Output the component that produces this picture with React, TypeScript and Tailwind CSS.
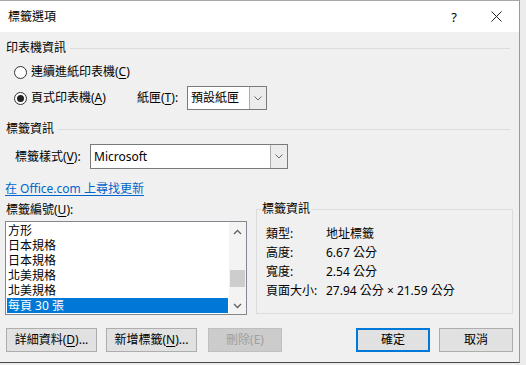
import React from "react";

const Chevron = ({ up = false, color = "#606060" }: { up?: boolean; color?: string }) => (
  <svg width="9" height="6" viewBox="0 0 9 6">
    <polyline
      points={up ? "1,5 4.5,1.5 8,5" : "1,1 4.5,4.5 8,1"}
      fill="none"
      stroke={color}
      strokeWidth="1.3"
    />
  </svg>
);

const Radio = ({ checked }: { checked?: boolean }) => (
  <span className="w-[13px] h-[13px] rounded-full border border-[#333] bg-white flex items-center justify-center shrink-0">
    {checked && <span className="w-[7px] h-[7px] rounded-full bg-[#222]" />}
  </span>
);

const Select = ({ value, w, h }: { value: string; w: string; h: string }) => (
  <div className={`${w} ${h} flex border border-[#7a7a7a] bg-white`}>
    <div className="flex-1 flex items-center pl-[3px] text-black">{value}</div>
    <div className="w-[17px] border-l border-[#adadad] bg-[#ececec] flex items-center justify-center">
      <svg width="8" height="5" viewBox="0 0 8 5">
        <polyline points="0.5,0.5 4,4 7.5,0.5" fill="none" stroke="#6a6a6a" strokeWidth="1" />
      </svg>
    </div>
  </div>
);

const Header = ({ text }: { text: string }) => (
  <div className="flex items-center h-4 ml-[6px] mr-[9px]">
    <span className="leading-4">{text}</span>
    <div className="flex-1 h-px bg-[#dcdcdc] ml-[4px]" />
  </div>
);

const U = ({ c }: { c: string }) => <span className="underline underline-offset-2">{c}</span>;

const Btn = ({
  children,
  w,
  variant = "normal",
  cls = "",
}: {
  children: React.ReactNode;
  w: string;
  variant?: "normal" | "default" | "disabled";
  cls?: string;
}) => {
  const v =
    variant === "default"
      ? "border-2 border-[#0078d7] bg-[#e1e1e1] text-black"
      : variant === "disabled"
      ? "border border-[#bfbfbf] bg-[#cccccc] text-[#a0a0a0]"
      : "border border-[#adadad] bg-[#e1e1e1] text-black";
  return <div className={`${w} h-[24px] flex items-center justify-center ${v} ${cls}`}>{children}</div>;
};

export default function App() {
  const rows = ["方形", "日本規格", "日本規格", "北美規格", "北美規格", "每頁 30 張"];
  return (
    <div className="w-[526px] h-[365px] bg-[#ececec] font-['Noto_Sans','Noto_Sans_CJK_TC',sans-serif] text-[12px] leading-4 text-black overflow-hidden">
      <div className="w-[520px] h-[363px] bg-[#f0f0f0] border-t border-r border-b border-t-[#a8a8a8] border-r-[#9a9a9a] border-b-[#4a4a4a] flex flex-col">
        {/* Title bar */}
        <div className="h-[31px] bg-white flex items-center shrink-0">
          <span className="ml-[8px]">標籤選項</span>
          <div className="flex-1" />
          <span className="text-[13px] mr-[34px]">?</span>
          <svg width="11" height="11" viewBox="0 0 11 11" className="mr-[17px]">
            <path d="M0.5 0.5 L10.5 10.5 M10.5 0.5 L0.5 10.5" stroke="#222" strokeWidth="1" />
          </svg>
        </div>

        {/* 印表機資訊 */}
        <div className="mt-[8px]">
          <Header text="印表機資訊" />
        </div>
        <div className="mt-[8px] h-4 flex items-center ml-[14px] gap-[4px]">
          <Radio />
          <span>
            連續進紙印表機(<U c="C" />)
          </span>
        </div>
        <div className="mt-[6px] h-[24px] flex items-center ml-[14px]">
          <Radio checked />
          <span className="ml-[4px] w-[106px]">
            頁式印表機(<U c="A" />)
          </span>
          <span className="w-[50px]">
            紙匣(<U c="T" />):
          </span>
          <Select value="預設紙匣" w="w-[80px]" h="h-[24px]" />
        </div>

        {/* 標籤資訊 */}
        <div className="mt-[11px]">
          <Header text="標籤資訊" />
        </div>
        <div className="mt-[7px] h-[25px] flex items-center ml-[15px]">
          <span className="w-[75px]">
            標籤樣式(<U c="V" />):
          </span>
          <Select value="Microsoft" w="w-[198px]" h="h-[25px]" />
        </div>
        <div className="mt-[12px] h-4 ml-[5px]">
          <span className="text-[#0066cc] underline underline-offset-2">在 Office.com 上尋找更新</span>
        </div>

        {/* lower area */}
        <div className="mt-[5px] flex">
          <div className="ml-[5px] w-[242px] flex flex-col">
            <div className="h-4 pl-[1px]">
              標籤編號(<U c="U" />):
            </div>
            <div className="mt-[3px] h-[94px] border border-[#828790] bg-white flex">
              <div className="flex-1 pt-[1px] flex flex-col">
                {rows.map((r, i) => (
                  <div
                    key={i}
                    className={`h-[15px] leading-[15px] pl-[1px] mx-[1px] overflow-hidden ${
                      i === rows.length - 1 ? "bg-[#0078d7] text-white" : ""
                    }`}
                  >
                    {r}
                  </div>
                ))}
              </div>
              <div className="w-[17px] bg-[#f3f3f3] flex flex-col">
                <div className="h-[17px] flex items-center justify-center pt-[2px]">
                  <Chevron up />
                </div>
                <div className="flex-1 flex flex-col">
                  <div className="mt-[31px] h-[17px] mx-[1px] bg-[#cdcdcd]" />
                </div>
                <div className="h-[17px] flex items-center justify-center">
                  <Chevron />
                </div>
              </div>
            </div>
          </div>

          <div className="ml-[9px] w-[257px] mt-[7px] h-[105px] border border-[#dcdcdc] relative">
            <span className="absolute left-[4px] top-[-9px] px-[1px] bg-[#f0f0f0] leading-4">標籤資訊</span>
            <div className="pt-[14px] pl-[9px] flex flex-col">
              {[
                ["類型:", "地址標籤"],
                ["高度:", "6.67 公分"],
                ["寬度:", "2.54 公分"],
                ["頁面大小:", "27.94 公分 × 21.59 公分"],
              ].map(([k, v], i) => (
                <div key={i} className="h-[19px] flex items-center">
                  <span className="w-[60px]">{k}</span>
                  <span>{v}</span>
                </div>
              ))}
            </div>
          </div>
        </div>

        {/* buttons */}
        <div className="mt-[13px] flex items-center mx-[6px]">
          <Btn w="w-[91px]">
            詳細資料(<U c="D" />)...
          </Btn>
          <Btn w="w-[91px]" cls="ml-[9px]">
            新增標籤(<U c="N" />)...
          </Btn>
          <Btn w="w-[74px]" cls="ml-[11px]" variant="disabled">
            刪除(E)
          </Btn>
          <div className="flex-1" />
          <Btn w="w-[74px]" variant="default">
            確定
          </Btn>
          <Btn w="w-[74px]" cls="ml-[9px]">
            取消
          </Btn>
        </div>
      </div>
    </div>
  );
}
